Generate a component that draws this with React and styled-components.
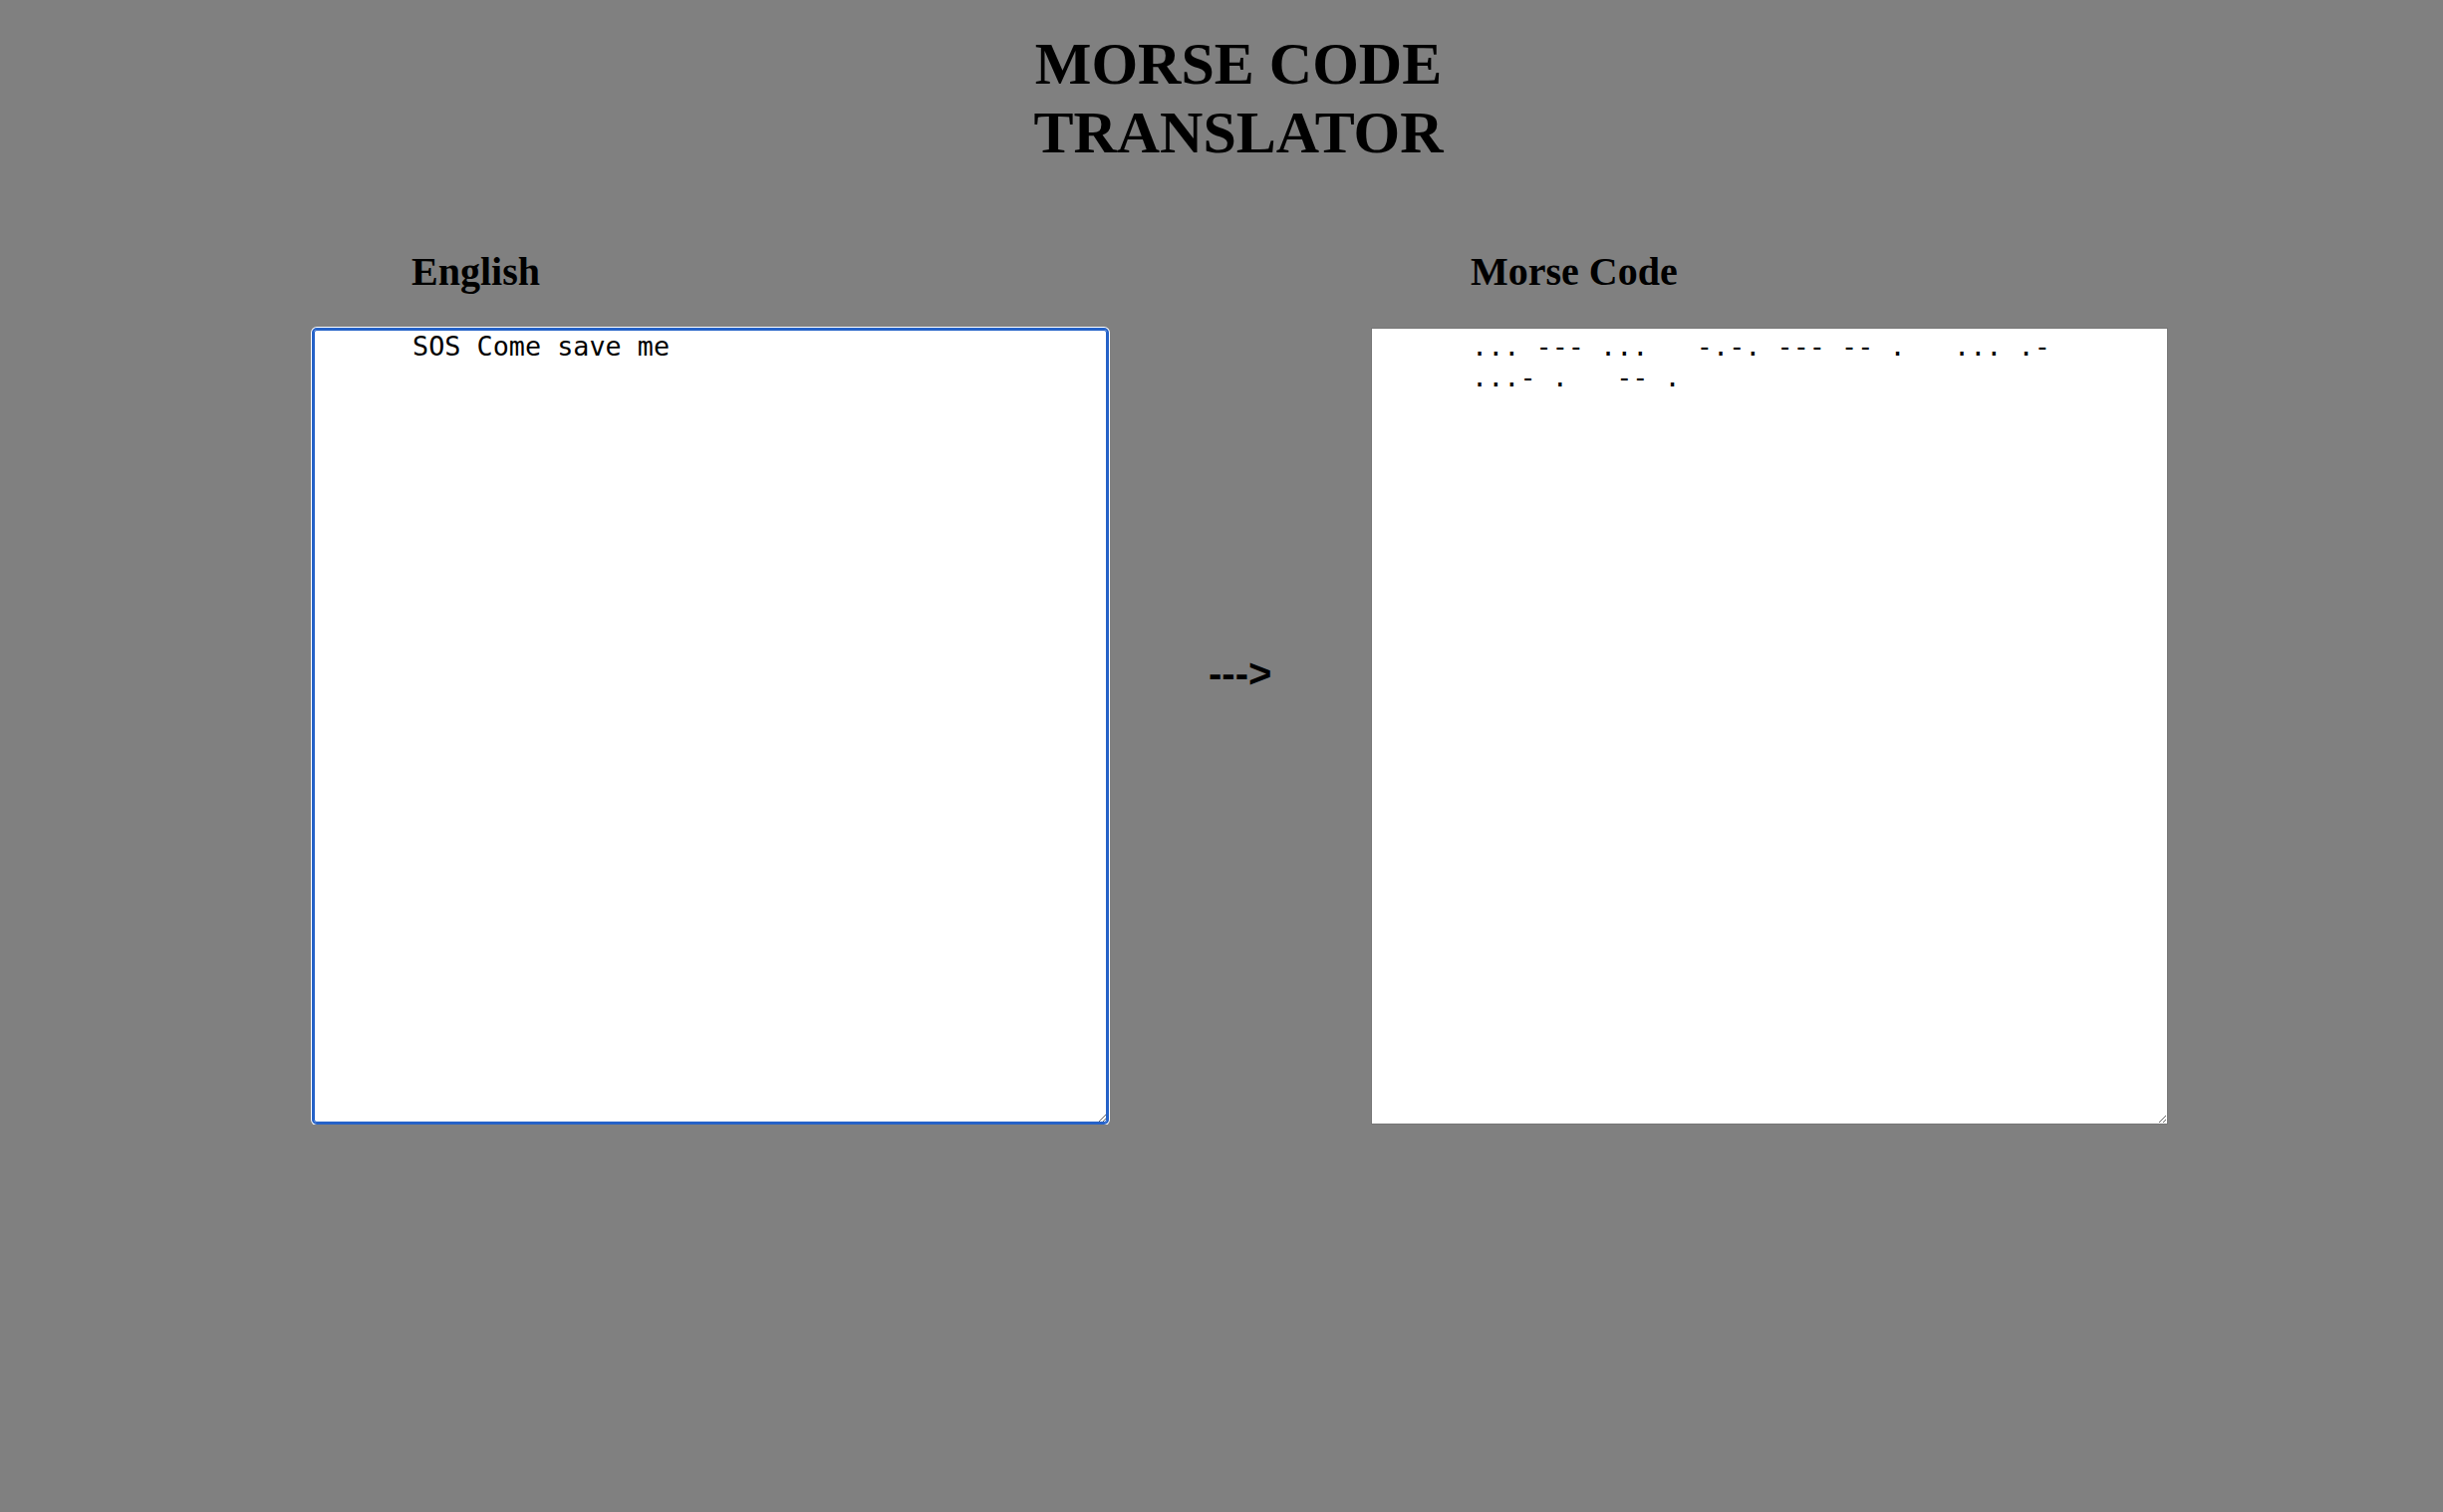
import { useEffect, useRef, useState } from "react"
import styled, { createGlobalStyle } from "styled-components"

const MORSE = {
    a: ".-", b: "-...", c: "-.-.", d: "-..", e: ".", f: "..-.", g: "--.", h: "....",
    i: "..", j: ".---", k: "-.-", l: ".-..", m: "--", n: "-.", o: "---", p: ".--.",
    q: "--.-", r: ".-.", s: "...", t: "-", u: "..-", v: "...-", w: ".--", x: "-..-",
    y: "-.--", z: "--..", 0: "-----", 1: ".----", 2: "..---", 3: "...--", 4: "....-",
    5: ".....", 6: "-....", 7: "--...", 8: "---..", 9: "----.",
}

const toMorse = (text) =>
    text
        .toLowerCase()
        .split(" ")
        .map(word => word.split("").map(ch => MORSE[ch] || "").filter(Boolean).join(" "))
        .join("   ")

const App = () => {
    const [english, setEnglish] = useState("SOS Come save me")
    const inputRef = useRef()

    useEffect(() => {
        const el = inputRef.current
        if (!el) return
        el.focus()
        el.setSelectionRange(el.value.length, el.value.length)
    }, [])

    return (
        <>
            <GlobalStyle />
            <Title>MORSE CODE TRANSLATOR</Title>
            <Row>
                <Col>
                    <Label>English</Label>
                    <TextBox
                        ref={inputRef}
                        $focused
                        value={english}
                        onChange={e => setEnglish(e.target.value)}
                    />
                </Col>
                <Arrow>---&gt;</Arrow>
                <Col>
                    <Label>Morse Code</Label>
                    <TextBox readOnly value={toMorse(english)} />
                </Col>
            </Row>
        </>
    )
}

export default App

const GlobalStyle = createGlobalStyle`
    html, body {
        margin: 0;
        background: #808080;
        min-height: 100%;
    }
    body {
        font-family: "Liberation Serif", "Times New Roman", serif;
    }
`
const Title = styled.h1`
    margin: 0 auto;
    padding: 30px 0 0 34px;
    width: 460px;
    font-size: 60px;
    line-height: 69px;
    font-weight: bold;
    text-align: center;
    color: #000;
`
const Row = styled.div`
    display: flex;
    justify-content: center;
    gap: 100px;
    padding-left: 37px;
    margin-top: 82px;
`
const Col = styled.div`
    display: flex;
    flex-direction: column;
`
const Label = styled.h2`
    margin: 0 0 33px 100px;
    font-size: 40px;
    line-height: 46px;
    font-weight: bold;
    color: #000;
`
const Arrow = styled.div`
    align-self: center;
    margin-bottom: 28px;
    width: 63px;
    font-family: "Liberation Sans", Arial, sans-serif;
    font-size: 40px;
    line-height: 46px;
    font-weight: bold;
    color: #000;
    white-space: nowrap;
`
const TextBox = styled.textarea`
    box-sizing: border-box;
    width: 800px;
    height: 800px;
    margin: 0;
    padding: ${p => (p.$focused ? "1px 99px" : "2px 100px")};
    border: ${p => (p.$focused ? "2px solid #2562c8" : "1px solid #767676")};
    border-radius: ${p => (p.$focused ? "5px" : "0")};
    box-shadow: ${p => (p.$focused ? "inset 0 0 0 1px #2562c8, 0 0 0 1px #fff" : "none")};
    outline: none;
    background: #fff;
    color: #000;
    font-family: "DejaVu Sans Mono", "Liberation Mono", monospace;
    font-size: 26.8px;
    line-height: normal;
    caret-color: #000;
`
